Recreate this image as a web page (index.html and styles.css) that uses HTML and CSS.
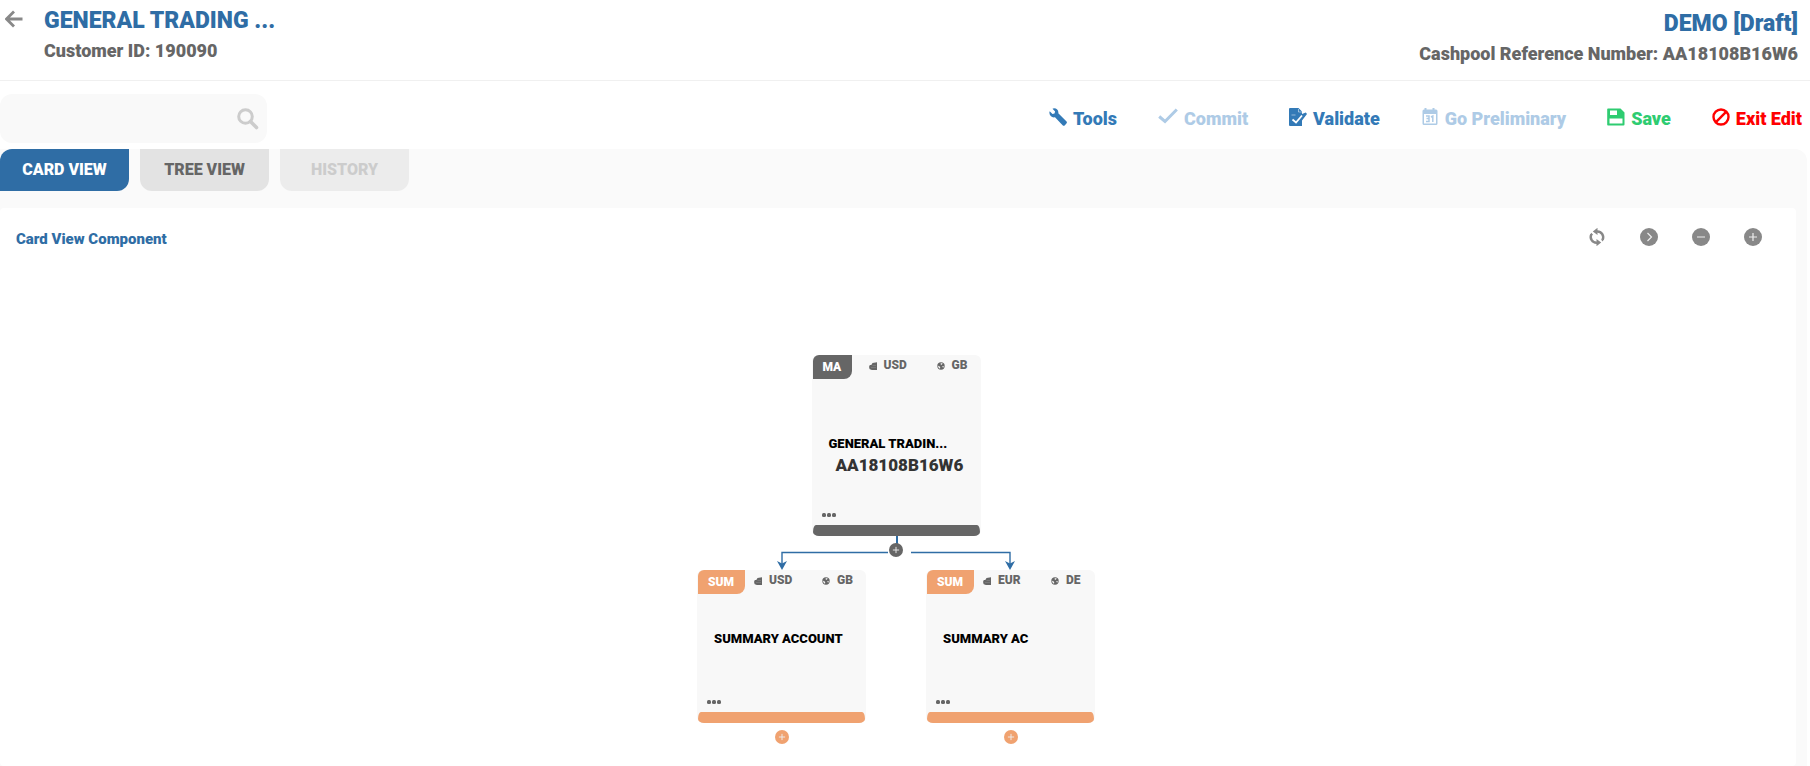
FILE: index.html
```html
<!DOCTYPE html>
<html lang="en">
<head>
    <meta charset="UTF-8">
    <meta name="viewport" content="width=device-width, initial-scale=1.0">
    <title>Cashpool - Card View</title>
    <link rel="stylesheet" href="styles.css">
</head>
<body>

    <!-- shared icons -->
    <svg class="sprite" aria-hidden="true">
        <symbol id="i-coins" viewBox="0 0 8 8">
            <path d="M3.500 1 8 .3v7.700H3L.8 7.300.2 6V4L1 3h1.300z"/>
            <path d="M3.500 3.500H7M2 5.500h5" stroke="#999" stroke-width=".4"/>
        </symbol>
        <symbol id="i-globe" viewBox="0 0 8 8">
            <circle cx="4" cy="4" r="3.700"/>
            <path d="M3.500 1.500 5.500 1l-.3 1.300L4 3zM1 3.700l1.500.5.8 1.500L2.800 6.800 1.500 5.500zM5 4.500 6.800 4l-.5 1.800z" fill="#f8f8f8"/>
        </symbol>
        <symbol id="i-plus" viewBox="0 0 18 18">
            <circle cx="9" cy="9" r="9"/>
            <path d="M5 9h8M9 5v8" stroke="#eee" stroke-width="1.200"/>
        </symbol>
        <symbol id="i-dots" viewBox="0 0 14 4">
            <rect x="0" y="0" width="4" height="4" rx="1.500"/>
            <rect x="5" y="0" width="4" height="4" rx="1.500"/>
            <rect x="10" y="0" width="4" height="4" rx="1.500"/>
        </symbol>
    </svg>

    <header class="header">
        <a class="back" href="#" aria-label="Back">
            <svg width="18" height="18" viewBox="0 0 18 18"><path d="M17.500 9H2M9 1.500 1.500 9 9 16.500" fill="none" stroke="currentColor" stroke-width="2.800"/></svg>
        </a>
        <div class="customer">
            <h1>GENERAL TRADING ...</h1>
            <p>Customer ID: 190090</p>
        </div>
        <div class="cashpool">
            <h2>DEMO [Draft]</h2>
            <p>Cashpool Reference Number: AA18108B16W6</p>
        </div>
    </header>

    <div class="toolbar">
        <form class="search">
            <input type="text" aria-label="Search">
            <button type="button" aria-label="Search">
                <svg width="22" height="22" viewBox="0 0 22 22"><g fill="none" stroke="currentColor"><circle cx="8.500" cy="8.500" r="6.800" stroke-width="3"/><path d="m13.500 13.500 6 6" stroke-width="3.600" stroke-linecap="round"/></g></svg>
            </button>
        </form>
        <div class="actions">
            <button type="button">
                <svg width="18" height="18" viewBox="0 0 18 18"><path d="M5 .3C8 .3 9.800 2.500 9.300 5.300l8 8c.8.800.8 1.600.1 2.300l-1.500 1.600c-.8.700-1.600.7-2.300 0L6 9.300C3 10 .2 7.800.4 4.500L.7 3.300 3.500 6l2-.4.600-2L3.500.8z"/></svg>
                Tools
            </button>
            <button type="button" class="off" disabled>
                <svg width="20" height="18" viewBox="0 0 20 18"><path d="M1.200 8.500 7 13.500 18.800 1.500" fill="none" stroke="currentColor" stroke-width="3"/></svg>
                Commit
            </button>
            <button type="button">
                <svg width="18" height="18" viewBox="0 0 18 18"><path d="M1 0h8.500L13 3.500V6l3.800-1.500L18 6l-5 6.500V18H1a1 1 0 0 1-1-1V1a1 1 0 0 1 1-1z"/><path d="m3.500 11.500 3.500 3L13 7.500" fill="none" stroke="#fff" stroke-width="1.800"/><path d="M2.500 7h4M9.500 1v3H13" fill="none" stroke="#fff" stroke-width=".5"/></svg>
                Validate
            </button>
            <button type="button" class="off" disabled>
                <svg width="18" height="18" viewBox="0 0 18 18"><path fill-rule="evenodd" d="M3.500 0h2v1.500h6V0h2v1.500H15A1.500 1.500 0 0 1 16.500 3v12.500A1.500 1.500 0 0 1 15 17H3a1.500 1.500 0 0 1-1.500-1.500V3A1.500 1.500 0 0 1 3 1.500h.5zM3 6v9.500h12V6z"/><path d="M5 8h3v5.500H5M5.500 10.600H8M10 9l1.800-1v6" fill="none" stroke="currentColor" stroke-width="1.500"/></svg>
                Go Preliminary
            </button>
            <button type="button" class="save">
                <svg width="18" height="18" viewBox="0 0 18 18"><path fill-rule="evenodd" d="M1 .5h12.500l4 4V16.500a1 1 0 0 1-1 1H1a.8.8 0 0 1-.8-.8V1.300A.8.800 0 0 1 1 .5zM3 2.500v4.500h7V2.500zM2.500 10.500v5h13v-5z"/></svg>
                Save
            </button>
            <button type="button" class="exit">
                <svg width="18" height="18" viewBox="0 0 18 18"><g fill="none" stroke="currentColor" stroke-width="2.400"><circle cx="9" cy="9" r="7.500"/><path d="M3.700 14.300 14.300 3.700"/></g></svg>
                Exit Edit
            </button>
        </div>
    </div>

    <main class="main">
        <nav class="tabs">
            <button type="button" class="active">CARD VIEW</button>
            <button type="button">TREE VIEW</button>
            <button type="button" disabled>HISTORY</button>
        </nav>

        <section class="panel">
            <div class="panel-head">
                <h3>Card View Component</h3>
                <div class="controls">
                    <button type="button" aria-label="Refresh"><svg width="18" height="18" viewBox="0 0 18 18"><g fill="none" stroke="currentColor" stroke-width="2.400"><path d="M9 3.500a5.800 5.800 0 0 1 5.600 8.300"/><path d="M9 14.800A5.800 5.800 0 0 1 3.400 6.300"/></g><path d="M9.500-.2v7.200L4.800 3.400zM8.500 11v7.200l4.700-3.600z"/><path d="m12.800 11.500 2 2 1-2.500zM5.200 6.800l-2-2-1 2.500z"/></svg></button>
                    <button type="button" aria-label="Expand"><svg width="18" height="18" viewBox="0 0 18 18"><circle cx="9" cy="9" r="9"/><path d="m7.500 5 4 4-4 4" fill="none" stroke="#eee" stroke-width="1.200"/></svg></button>
                    <button type="button" aria-label="Zoom out"><svg width="18" height="18" viewBox="0 0 18 18"><circle cx="9" cy="9" r="9"/><path d="M5 9h8" stroke="#ddd" stroke-width="1.200"/></svg></button>
                    <button type="button" aria-label="Zoom in"><svg width="18" height="18"><use href="#i-plus"/></svg></button>
                </div>
            </div>

            <div class="tree">
                <article class="card root">
                    <div class="card-top">
                        <span class="badge">MA</span>
                        <span class="currency"><svg width="8" height="8"><use href="#i-coins"/></svg>USD</span>
                        <span class="country"><svg width="8" height="8"><use href="#i-globe"/></svg>GB</span>
                    </div>
                    <div class="card-body">
                        <h4>GENERAL TRADIN...</h4>
                        <p>AA18108B16W6</p>
                    </div>
                    <button type="button" class="more" aria-label="More"><svg width="14" height="4"><use href="#i-dots"/></svg></button>
                    <div class="bar"></div>
                </article>

                <div class="links">
                    <svg width="232" height="34" viewBox="0 0 232 34">
                        <g fill="none" stroke="#2f6da5" stroke-width="1.400">
                            <path d="M117 0v8" stroke-width="2"/>
                            <path d="M108 16.500H2V28"/>
                            <path d="M131 16.500H230V28"/>
                        </g>
                    </svg>
                    <div class="arrows">
                        <svg width="10" height="9" viewBox="0 0 10 9"><path d="m0 0 5 2.500L10 0 5 9z"/></svg>
                        <svg width="10" height="9" viewBox="0 0 10 9"><path d="m0 0 5 2.500L10 0 5 9z"/></svg>
                    </div>
                    <button type="button" class="toggle" aria-label="Collapse"><svg width="14" height="14"><use href="#i-plus"/></svg></button>
                </div>

                <div class="children">
                    <div class="child">
                        <article class="card">
                            <div class="card-top">
                                <span class="badge">SUM</span>
                                <span class="currency"><svg width="8" height="8"><use href="#i-coins"/></svg>USD</span>
                                <span class="country"><svg width="8" height="8"><use href="#i-globe"/></svg>GB</span>
                            </div>
                            <div class="card-body">
                                <h4>SUMMARY ACCOUNT</h4>
                            </div>
                            <button type="button" class="more" aria-label="More"><svg width="14" height="4"><use href="#i-dots"/></svg></button>
                            <div class="bar"></div>
                        </article>
                        <button type="button" class="toggle" aria-label="Expand"><svg width="14" height="14"><use href="#i-plus"/></svg></button>
                    </div>
                    <div class="child">
                        <article class="card">
                            <div class="card-top">
                                <span class="badge">SUM</span>
                                <span class="currency"><svg width="8" height="8"><use href="#i-coins"/></svg>EUR</span>
                                <span class="country"><svg width="8" height="8"><use href="#i-globe"/></svg>DE</span>
                            </div>
                            <div class="card-body">
                                <h4>SUMMARY AC</h4>
                            </div>
                            <button type="button" class="more" aria-label="More"><svg width="14" height="4"><use href="#i-dots"/></svg></button>
                            <div class="bar"></div>
                        </article>
                        <button type="button" class="toggle" aria-label="Expand"><svg width="14" height="14"><use href="#i-plus"/></svg></button>
                    </div>
                </div>
            </div>
        </section>
    </main>

</body>
</html>
```

FILE: styles.css
```css
* {
    box-sizing: border-box;
}

body {
    margin: 0;
    min-height: 100vh;
    display: flex;
    flex-direction: column;
    font-family: Roboto, "Liberation Sans", sans-serif;
    font-weight: 900;
    color: #666;
    background: #fff;
}

h1, h2, h3, h4, p {
    margin: 0;
    font-weight: inherit;
}

button {
    padding: 0;
    border: none;
    background: none;
    color: inherit;
    font: inherit;
    cursor: pointer;
}

svg {
    display: block;
    fill: currentColor;
}

.sprite {
    position: absolute;
    width: 0;
    height: 0;
}

/* header */
.header {
    display: flex;
    height: 81px;
    padding: 6px 12px 0 5px;
    border-bottom: 1px solid #f0f0f0;
}

.back {
    width: 39px;
    padding-top: 4px;
    color: #888;
}

.customer, .cashpool {
    font-size: 18px;
    line-height: 30px;
}

.header h1, .header h2 {
    font-size: 23px;
    color: #2f6da5;
}

.cashpool {
    margin-left: auto;
    padding-top: 3px;
    text-align: right;
}

/* toolbar */
.toolbar {
    display: flex;
    align-items: center;
    justify-content: space-between;
    height: 68px;
    padding: 7px 8px 0 0;
}

.search {
    display: flex;
    align-items: center;
    width: 267px;
    height: 49px;
    padding-right: 8px;
    border-radius: 12px;
    background: #f9f9f9;
    color: #ccc;
}

.search input {
    flex: 1;
    min-width: 0;
    height: 100%;
    border: none;
    outline: none;
    background: none;
}

.actions {
    display: flex;
    gap: 41px;
    font-size: 18px;
    color: #337ab7;
}

.actions button {
    display: flex;
    align-items: center;
    gap: 6px;
}

.actions svg {
    margin-bottom: 4px;
}

.actions .off {
    color: #aecbe6;
}

.actions .save {
    color: #2ecc71;
}

.actions .exit {
    color: #f00;
}

/* tabs */
.main {
    flex: 1;
    display: flex;
    flex-direction: column;
    margin-right: 3px;
    border-top-right-radius: 12px;
    background: #fafafa;
}

.tabs {
    display: flex;
    gap: 11px;
    margin-bottom: 17px;
}

.tabs button {
    width: 129px;
    height: 42px;
    padding-bottom: 2px;
    border-radius: 0 0 12px 12px;
    background: #e3e3e3;
    font-size: 16px;
}

.tabs .active {
    border-radius: 12px 0 12px 0;
    background: #2f6da5;
    color: #fff;
}

.tabs button:disabled {
    background: #ececec;
    color: #ccc;
}

/* card view */
.panel {
    flex: 1;
    margin-right: 11px;
    border-radius: 4px;
    background: #fff;
}

.panel-head {
    display: flex;
    justify-content: space-between;
    padding: 20px 34px 0 16px;
}

.panel-head h3 {
    font-size: 15px;
    line-height: 22px;
    color: #2f6da5;
}

.controls {
    display: flex;
    align-items: flex-start;
    gap: 34px;
    color: #888;
}

.tree {
    display: flex;
    flex-direction: column;
    align-items: center;
    padding: 105px 4px 0 0;
}

.card {
    display: flex;
    flex-direction: column;
    width: 169px;
    height: 153px;
    padding: 0 1px;
    border-radius: 6px;
    background: #f8f8f8;
}

.card.root {
    height: 181px;
}

.card-top {
    display: grid;
    grid-template-columns: 56px 68px auto;
    align-items: start;
    font-size: 12px;
    line-height: 21px;
}

.badge {
    justify-self: start;
    padding: 0 11px 0 10px;
    border-radius: 6px 0 8px 0;
    background: #f0a270;
    color: #fff;
    line-height: 24px;
}

.currency, .country {
    display: flex;
    align-items: center;
    gap: 7px;
}

.card-body {
    flex: 1;
    padding: 35px 15px 0 16px;
}

.root .card-body {
    padding-top: 55px;
}

.card-body h4 {
    color: #000;
    font-size: 13px;
    line-height: 20px;
}

.card-body p {
    padding-left: 7px;
    color: #333;
    font-size: 17px;
    line-height: 22px;
}

.more {
    align-self: flex-start;
    margin: 0 0 8px 9px;
}

.bar {
    height: 11px;
    border-radius: 3px 3px 6px 6px / 7px 7px 4px 4px;
    background: #f0a270;
}

.root .badge, .root .bar {
    background: #666;
}

.links {
    position: relative;
}

/* arrow heads and toggle lie over the connector lines */
.arrows {
    position: absolute;
    bottom: 0;
    left: -3px;
    right: -3px;
    display: flex;
    justify-content: space-between;
    color: #2f6da5;
}

.links .toggle {
    position: absolute;
    top: 7px;
    left: 109px;
}

.children {
    display: flex;
    gap: 60px;
}

.child {
    display: flex;
    flex-direction: column;
    align-items: center;
    gap: 7px;
}

.child > .toggle {
    color: #f0a270;
}
```
